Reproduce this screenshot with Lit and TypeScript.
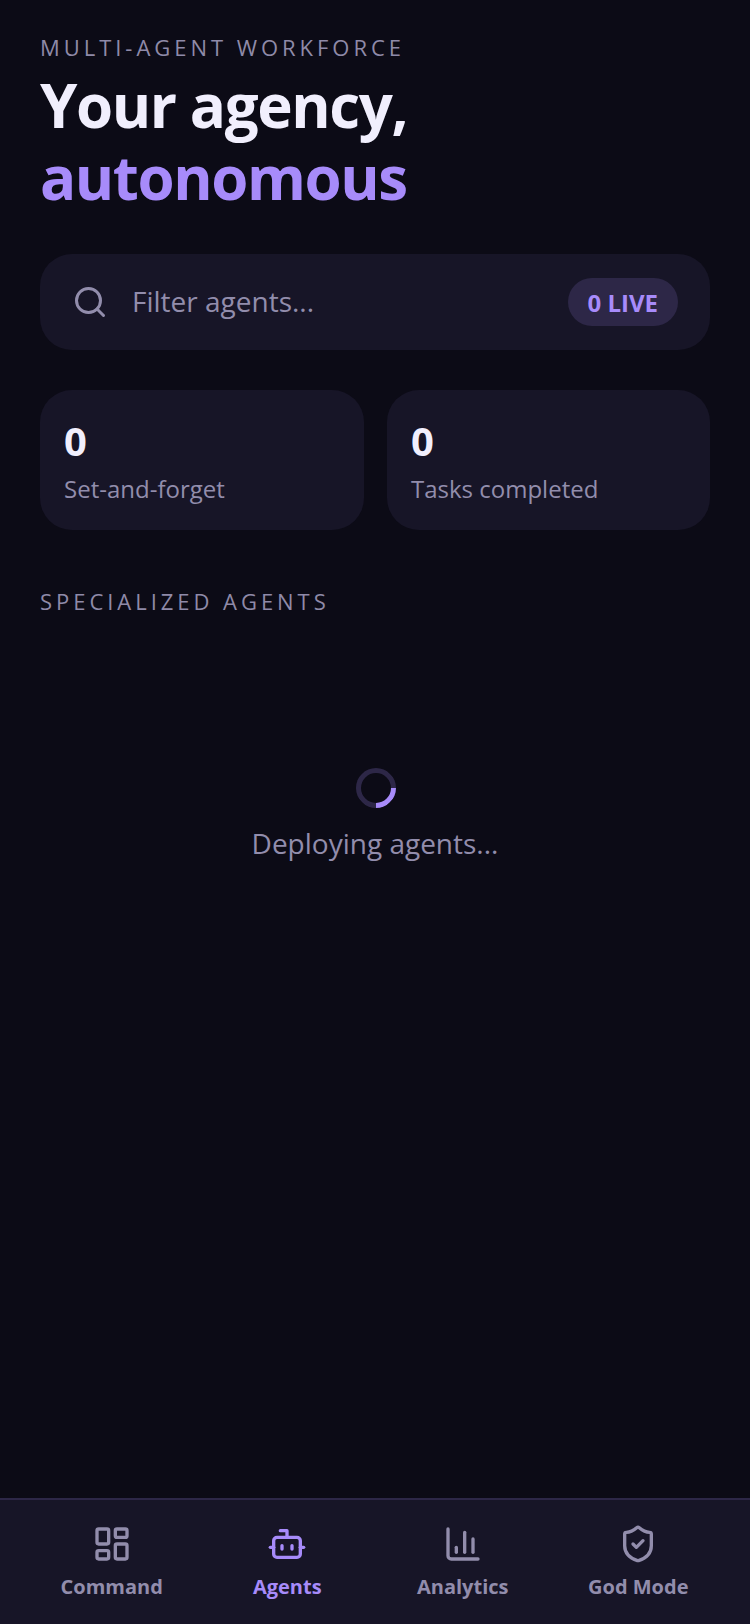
import { LitElement, html, css, svg } from "lit";
import { customElement } from "lit/decorators.js";

const NAV = [
  { label: "Command", active: false, icon: svg`<rect width="7" height="9" x="3" y="3" rx="1"/><rect width="7" height="5" x="14" y="3" rx="1"/><rect width="7" height="9" x="14" y="12" rx="1"/><rect width="7" height="5" x="3" y="16" rx="1"/>` },
  { label: "Agents", active: true, icon: svg`<path d="M12 8V4H8"/><rect width="16" height="12" x="4" y="8" rx="2"/><path d="M2 14h2"/><path d="M20 14h2"/><path d="M15 13v2"/><path d="M9 13v2"/>` },
  { label: "Analytics", active: false, icon: svg`<path d="M3 3v16a2 2 0 0 0 2 2h16"/><path d="M18 17V9"/><path d="M13 17V5"/><path d="M8 17v-3"/>` },
  { label: "God Mode", active: false, icon: svg`<path d="M20 13c0 5-3.5 7.5-7.66 8.95a1 1 0 0 1-.67-.01C7.5 20.5 4 18 4 13V6a1 1 0 0 1 1-1c2 0 4.5-1.2 6.24-2.72a1.17 1.17 0 0 1 1.52 0C14.51 3.81 17 5 19 5a1 1 0 0 1 1 1z"/><path d="m9 12 2 2 4-4"/>` },
];

@customElement("app-root")
export class AppRoot extends LitElement {
  static styles = css`
    :host {
      display: flex;
      flex-direction: column;
      height: 1624px;
      background: #0c0b16;
      font-family: "Open Sans", sans-serif;
      color: #f1effd;
      overflow: hidden;
    }
    .main { flex: 1; padding: 32px 40px 0; min-height: 0; }
    .eyebrow { font-size: 22px; line-height: 30px; letter-spacing: 3.96px; color: #8f8aa8; text-transform: uppercase; }
    h1 { margin: 7px 0 0; font-size: 60px; line-height: 72px; font-weight: 700; letter-spacing: -1.4px; }
    h1 span { display: block; color: #a78bfa; }
    .search {
      margin-top: 41px; display: flex; align-items: center; gap: 24px;
      background: #171527; border-radius: 32px; padding: 24px 32px; height: 96px; box-sizing: border-box;
    }
    .search svg { width: 36px; height: 36px; stroke: #928dac; flex: none; }
    .placeholder { flex: 1; font-size: 28px; color: #928dac; padding-bottom: 2px; }
    .badge { height: 48px; padding: 0 20px; border-radius: 24px; background: #2d2747; color: #a78bfa; font-size: 24px; font-weight: 700; display: flex; align-items: center; }
    .cards { margin-top: 40px; display: grid; grid-template-columns: 323.5fr 323fr; gap: 23.5px; }
    .card { background: #171527; border-radius: 32px; height: 140px; box-sizing: border-box; padding: 24px; }
    .num { font-size: 40px; line-height: 54px; font-weight: 700; }
    .lbl { font-size: 24px; line-height: 36px; color: #928dac; margin-top: 3px; }
    .section { margin-top: 56px; font-size: 22px; line-height: 30px; letter-spacing: 3.96px; color: #8f8aa8; text-transform: uppercase; }
    .loading { margin-top: 152px; display: flex; flex-direction: column; align-items: center; gap: 15px; }
    .spinner { width: 40px; height: 40px; margin-left: 2px; box-sizing: border-box; border-radius: 50%; border: 5px solid #2d2747; border-right-color: #a78bfa; transform: rotate(45deg); }
    .loading p { margin: 0; font-size: 28px; line-height: 40px; color: #928dac; }
    nav { height: 126px; box-sizing: border-box; background: #171527; border-top: 2px solid #2d2747; padding: 24px 24px 0; display: grid; grid-template-columns: repeat(4, 1fr); }
    .item { display: flex; flex-direction: column; align-items: center; gap: 8px; color: #928dac; }
    .item.active { color: #a78bfa; }
    .item svg { width: 40px; height: 40px; stroke: currentColor; }
    .item span { font-size: 20px; line-height: 30px; font-weight: 700; }
    svg { fill: none; stroke-width: 2; stroke-linecap: round; stroke-linejoin: round; }
  `;

  render() {
    return html`
      <div class="main">
        <div class="eyebrow">Multi-agent workforce</div>
        <h1>Your agency,<span>autonomous</span></h1>
        <div class="search">
          <svg viewBox="0 0 24 24"><circle cx="11" cy="11" r="8"/><path d="m21 21-4.3-4.3"/></svg>
          <div class="placeholder">Filter agents...</div>
          <div class="badge">0 LIVE</div>
        </div>
        <div class="cards">
          <div class="card"><div class="num">0</div><div class="lbl">Set-and-forget</div></div>
          <div class="card"><div class="num">0</div><div class="lbl">Tasks completed</div></div>
        </div>
        <div class="section">Specialized agents</div>
        <div class="loading">
          <div class="spinner"></div>
          <p>Deploying agents...</p>
        </div>
      </div>
      <nav>
        ${NAV.map(n => html`<div class="item ${n.active ? "active" : ""}"><svg viewBox="0 0 24 24">${n.icon}</svg><span>${n.label}</span></div>`)}
      </nav>
    `;
  }
}
